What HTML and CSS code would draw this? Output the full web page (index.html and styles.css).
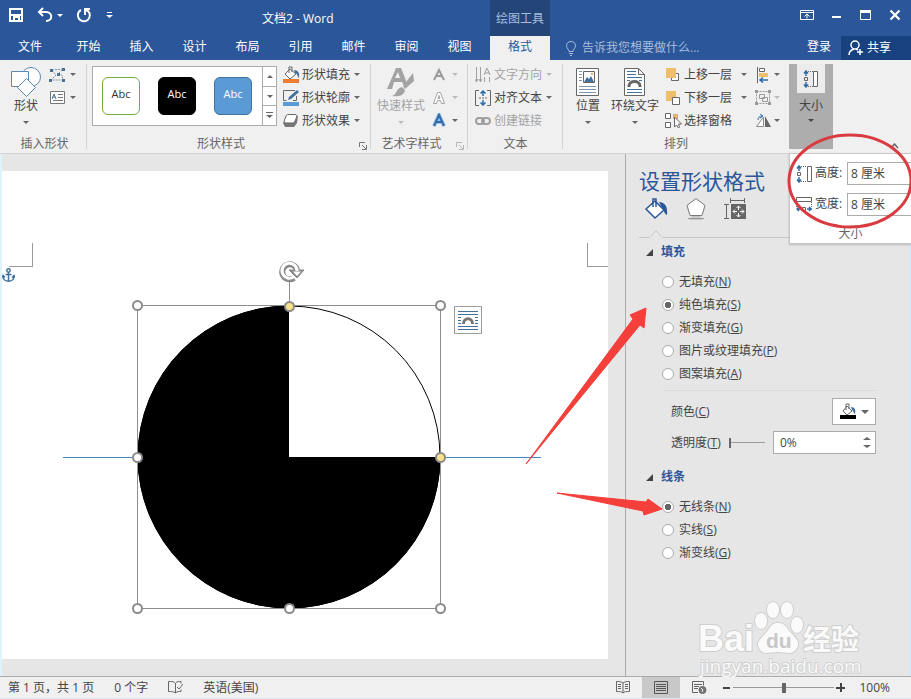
FILE: index.html
```html
<!DOCTYPE html>
<html lang="zh-CN">
<head>
    <meta charset="utf-8">
    <title>文档2 - Word</title>
    <link rel="stylesheet" href="styles.css">
</head>
<body>
<div class="app">
    <header class="titlebar">
        <div class="quick">
            <button class="plain" aria-label="保存"><svg width="16" height="16" viewBox="0 0 16 16" fill="none" stroke="#fff" stroke-width="2"><path d="M2 2h12v12H2z"/><path d="M2 8h12" /><path d="M6 14v-4h5v4"/></svg></button>
            <button class="plain undo" aria-label="撤消"><svg width="16" height="16" viewBox="0 0 16 16" fill="none" stroke="#fff" stroke-width="2"><path d="M6 1L2 5l4 4M2 5h7c7 0 7 9 0 9"/></svg><span class="caret"></span></button>
            <button class="plain redo" aria-label="重复"><svg width="16" height="16" viewBox="0 0 16 16" fill="none" stroke="#fff" stroke-width="2"><path d="M5 3a6 6 0 1 0 7 1L9 3"/><path d="M14 2H9v6"/></svg></button>
            <button class="plain more" aria-label="自定义"><svg width="7" height="7" viewBox="0 0 7 7" fill="#fff"><path d="M1 0h5v1H1zM0 3h7L3.500 6z"/></svg></button>
        </div>
        <div class="doc-title">文档2 - Word</div>
        <div class="context-title">绘图工具</div>
        <div class="window-buttons">
            <button class="plain" aria-label="功能区显示选项"><svg width="14" height="12" viewBox="0 0 14 12" fill="none" stroke="#fff"><path d="M.5 1.500h13v9H.5zM.5 3.500h13M7 9.500v-4M4.500 7.500L7 5l2.500 2.500"/></svg></button>
            <button class="plain" aria-label="最小化"><svg width="10" height="12" viewBox="0 0 10 12"><path d="M0 7h9v2H0z" fill="#fff"/></svg></button>
            <button class="plain" aria-label="最大化"><svg width="11" height="12" viewBox="0 0 11 12"><path d="M.5 1.500h10v9H.5z" fill="none" stroke="#fff"/><path d="M0 1h11v3H0z" fill="#fff"/></svg></button>
            <button class="plain" aria-label="关闭"><svg width="12" height="12" viewBox="0 0 12 12"><path d="M1.500 1.500l9 9M10.500 1.500l-9 9" stroke="#fff" stroke-width="2.200"/></svg></button>
        </div>
    </header>
    <nav class="tabs">
        <button class="tab file">文件</button>
        <button class="tab">开始</button>
        <button class="tab">插入</button>
        <button class="tab">设计</button>
        <button class="tab">布局</button>
        <button class="tab">引用</button>
        <button class="tab">邮件</button>
        <button class="tab">审阅</button>
        <button class="tab">视图</button>
        <button class="tab active">格式</button>
        <button class="tell-me"><svg width="10" height="15" viewBox="0 0 10 15" fill="none" stroke="#a9bddc"><path d="M3 10.500c0-2-2.500-3-2.500-6a4.500 4 0 0 1 9 0c0 3-2.500 4-2.500 6zM3 12.500h4M4 14.500h2"/></svg>告诉我您想要做什么...</button>
        <button class="login">登录</button>
        <button class="share"><svg width="16" height="16" viewBox="0 0 16 16" fill="none" stroke="#fff" stroke-width="1.500"><circle cx="7" cy="5" r="4"/><path d="M1 15c0-3 2-5 5-6M8 9l2 1M12 9v6M9 12h6"/></svg>共享</button>
    </nav>

    <section class="ribbon">
        <div class="group insert">
            <div class="tools">
                <button class="big"><svg width="30" height="30" viewBox="0 0 30 30" fill="#fff" stroke="#5b87b3"><circle cx="20" cy="10" r="9.500"/><path d="M.5 4.500h17v15H.5z"/><path d="M15.500 11.500l9 9-9 9-9-9z"/></svg><span>形状</span><i class="caret"></i></button>
                <div class="rows">
                    <button class="row" aria-label="编辑形状"><svg width="17" height="16" viewBox="0 0 17 16"><path d="M3 3l11-1M3 3l4 5-5 5h12l-1-5-4-1 5-5" fill="none" stroke="#7d95ad" stroke-dasharray="2 1"/><path d="M1 2h3v3H1zM13 1h3v3h-3zM0 12h3v3H0zM13 12h3v3h-3zM8 6h3v3H8z" fill="#4c6f94"/></svg><i class="caret"></i></button>
                    <button class="row" aria-label="文本框"><svg width="17" height="14" viewBox="0 0 17 14" fill="none" stroke="#777"><path d="M1.500.5h14v12h-14z" fill="#fff"/><path d="M9 3.500h5M9 6.500h5M4 9.500h10"/><path d="M3 8l2-5 2 5M4 6h2" stroke="#41719c"/></svg><i class="caret"></i></button>
                </div>
            </div>
            <div class="group-name"><span>插入形状</span></div>
        </div>

        <div class="group styles">
            <div class="tools">
                <div class="gallery">
                    <div class="samples">
                        <button class="sample outline">Abc</button>
                        <button class="sample black">Abc</button>
                        <button class="sample blue">Abc</button>
                    </div>
                    <div class="gallery-scroll">
                        <button aria-label="上一行"><i class="caret up"></i></button>
                        <button aria-label="下一行"><i class="caret"></i></button>
                        <button aria-label="其他"><svg width="7" height="7" viewBox="0 0 7 7" fill="#666"><path d="M0 0h7v1H0zM0 3h7L3.500 6z"/></svg></button>
                    </div>
                </div>
                <div class="rows">
                    <button class="row"><svg width="17" height="17" viewBox="0 0 17 17"><path d="M7 3l6 5-6 5-5-5z" fill="#fff" stroke="#666"/><path d="M6 7V1h3v5" fill="none" stroke="#666"/><path d="M11 4c4 0 6 3 5 8-2-2-1-4-4-5z" fill="#41719c"/><path d="M0 13h16v4H0z" fill="#ed7d31"/></svg>形状填充<i class="caret"></i></button>
                    <button class="row"><svg width="17" height="17" viewBox="0 0 17 17"><path d="M12 1.500H.5v10h3M13.500 7v4.500H10" fill="none" stroke="#666"/><path d="M5 11l1-3 8-7 2 2-8 7z" fill="#41719c"/><path d="M0 13h16v4H0z" fill="#5b9bd5"/></svg>形状轮廓<i class="caret"></i></button>
                    <button class="row"><svg width="17" height="15" viewBox="0 0 17 15"><path d="M4 3h11l-1 7-3 4H2L0 10z" fill="#777"/><path d="M5 1.500h7c2 0 2 1 1.500 3L12 8c-1 2-2 2-3 2H3c-2 0-2-1-1.500-3L3 3c.5-1 1-1.500 2-1.500z" fill="#fff" stroke="#666"/></svg>形状效果<i class="caret"></i></button>
                </div>
            </div>
            <div class="group-name"><span>形状样式</span><button class="launcher" aria-label="设置形状格式"><svg width="8" height="8" viewBox="0 0 8 8" fill="none" stroke="#777"><path d="M.5 5V.5H6M3 3l4 4M7.500 3v4.500H3"/></svg></button></div>
        </div>

        <div class="group wordart">
            <div class="tools">
                <button class="big dim"><svg width="30" height="30" viewBox="0 0 30 30" fill="#a3a3a3"><path d="M1 22L10 1h5l6 15-3 3-2-4H8l-2 7zM9 11h5l-2-6z"/><path d="M27 6l1 8-9 8-2-3z"/><path d="M16 20l3 3c-1 6-7 7-13 6 5-1 4-8 10-9z"/></svg><span>快速样式</span><i class="caret"></i></button>
                <div class="rows">
                    <button class="row dim" aria-label="文本填充"><svg width="14" height="14" viewBox="0 0 14 14"><path d="M2 12L7 2l5 10M4 8h6" fill="none" stroke="#9b9b9b" stroke-width="2"/></svg><i class="caret"></i></button>
                    <button class="row dim" aria-label="文本轮廓"><svg width="14" height="14" viewBox="0 0 14 14"><path d="M1.500 12.500l4-11h3l4 11h-3l-1-3h-3l-1 3zM6 7.500h2l-1-3z" fill="#fff" stroke="#a5a5a5"/></svg><i class="caret"></i></button>
                    <button class="row" aria-label="文本效果"><svg width="14" height="15" viewBox="0 0 14 15"><path d="M2 13L7 2l5 11M4 9h6" fill="none" stroke="#9cc3e6" stroke-width="4"/><path d="M2 13L7 2l5 11M4 9h6" fill="none" stroke="#2f6cab" stroke-width="2"/></svg><i class="caret"></i></button>
                </div>
            </div>
            <div class="group-name"><span>艺术字样式</span><button class="launcher dim" aria-label="设置文本效果"><svg width="8" height="8" viewBox="0 0 8 8" fill="none" stroke="#b5b5b5"><path d="M.5 5V.5H6M3 3l4 4M7.500 3v4.500H3"/></svg></button></div>
        </div>

        <div class="group text">
            <div class="tools">
                <div class="rows">
                    <button class="row dim"><svg width="17" height="16" viewBox="0 0 17 16" fill="none" stroke="#a0a0a0"><path d="M1.500 0v14M5.500 0v14M0 12l1.500 3L3 12M4 12l1.500 3L7 12M9 8l3-7 3 7M10 6h4M9.500 10v5M14.500 10v5"/></svg>文字方向<i class="caret"></i></button>
                    <button class="row"><svg width="17" height="16" viewBox="0 0 17 16" fill="none" stroke="#666"><path d="M4 .5H.5v15H4M12 .5h3.500v15H12"/><path d="M4 8h9" stroke-dasharray="2 1"/><path d="M8 6V1M5.500 3.500L8 1l2.500 2.500M8 10v5M5.500 12.500L8 15l2.500-2.500" stroke="#2b6ca8" stroke-width="1.500"/></svg>对齐文本<i class="caret"></i></button>
                    <button class="row dim"><svg width="17" height="10" viewBox="0 0 17 10" fill="none" stroke="#a0a0a0" stroke-width="2"><rect x="1" y="2" width="8" height="6" rx="3"/><rect x="7" y="2" width="8" height="6" rx="3"/></svg>创建链接</button>
                </div>
            </div>
            <div class="group-name"><span>文本</span></div>
        </div>

        <div class="group arrange">
            <div class="tools">
                <button class="big"><svg width="24" height="30" viewBox="0 0 24 30" fill="none" stroke="#666"><path d="M.5 1.500h22v27H.5z" fill="#fff"/><path d="M3 4.500h3M3 7.500h3M3 10.500h3M3 13.500h3M3 19.500h17M3 22.500h17M3 25.500h17" stroke="#7d95ad"/><path d="M7.500 4.500h11v11h-11z"/><path d="M8 15l3-5 2 2 2-3 3 6z" fill="#41719c" stroke="none"/><circle cx="16" cy="7" r="1" fill="#ed9d31" stroke="none"/></svg><span>位置</span><i class="caret"></i></button>
                <button class="big wrap"><svg width="22" height="30" viewBox="0 0 22 30" fill="none" stroke="#666"><path d="M.5 1.500h14l6 6v21H.5zM14.500 1.500v6h6" fill="#fff"/><path d="M3 4.500h9M3 7.500h9M3 10.500h15M3 13.500h3M15 13.500h3M3 22.500h15M3 25.500h15" stroke="#41719c"/><path d="M5 20v-1c0-6 11-6 11 0v1" stroke-width="3"/></svg><span>环绕文字</span><i class="caret"></i></button>
                <div class="rows order">
                    <button class="row"><svg width="17" height="16" viewBox="0 0 17 16"><path d="M8.500 6.500h5v7h-7v-4" fill="#fff" stroke="#666"/><path d="M1 1h10v10H1z" fill="#f0bd68"/></svg>上移一层<i class="caret"></i></button>
                    <button class="row"><svg width="17" height="16" viewBox="0 0 17 16"><path d="M1 1h10v10H1z" fill="#f0bd68"/><path d="M7.500 7.500h7v7h-7z" fill="#fff" stroke="#666"/></svg>下移一层<i class="caret"></i></button>
                    <button class="row"><svg width="17" height="17" viewBox="0 0 17 17" fill="#fff" stroke="#666"><path d="M8.500 2.500h4v4h-4z" fill="#f0bd68" stroke="#e0a850"/><path d="M.5 1.500h5v5h-5zM.5 10.500h5v5h-5z"/><path d="M9.500 5v10l2-2 2 3 1-1-1-3h3z"/></svg>选择窗格</button>
                </div>
                <div class="rows align">
                    <button class="row" aria-label="对齐"><svg width="17" height="16" viewBox="0 0 17 16"><path d="M2.500 0v16" stroke="#666"/><path d="M4.500 1.500h5v3h-5z" fill="#fff" stroke="#666"/><path d="M4 6h9v4H4z" fill="#f0bd68"/><path d="M13 13H5M8 10.500L5 13l3 2.500" fill="none" stroke="#2b6ca8" stroke-width="1.500"/></svg><i class="caret"></i></button>
                    <button class="row dim" aria-label="组合"><svg width="17" height="16" viewBox="0 0 17 16" fill="none" stroke="#999"><path d="M1.500 1.500h13v12h-13z" stroke-dasharray="2 1"/><path d="M4.500 4.500h5v4h-5zM7.500 7.500h5v4h-5z"/><path d="M0 0h3v3H0zM13 0h3v3h-3zM0 12h3v3H0zM13 12h3v3h-3z" fill="#999" stroke="none"/></svg><i class="caret"></i></button>
                    <button class="row" aria-label="旋转"><svg width="17" height="14" viewBox="0 0 17 14"><path d="M8.500 3v9.500h-7z" fill="#fff" stroke="#888"/><path d="M10 2v11h6z" fill="#666"/><path d="M3 6c0-3 2-4 4-4M5 0l3 2-3 2" fill="none" stroke="#2b6ca8"/></svg><i class="caret"></i></button>
                </div>
            </div>
            <div class="group-name"><span>排列</span></div>
        </div>

        <div class="size-menu">
            <button class="size-button"><span class="size-icon"><svg width="16" height="18" viewBox="0 0 16 18" fill="none" stroke="#666"><path d="M10.500 1.500h4v15h-4z" fill="#fff"/><path d="M1.500 7.500h3v3h-3z"/><path d="M5 1.500h5M5 16.500h5" stroke-dasharray="1 1"/><path d="M3 1v5M1 3.500L3 1l2 2.500M3 12v5M1 14.500L3 17l2-2.500" stroke="#2b6ca8" stroke-width="1.500"/></svg></span><span>大小</span><i class="caret"></i></button>
            <div class="size-popup">
                <div class="size-row"><svg width="17" height="18" viewBox="0 0 17 18" fill="none" stroke="#666"><path d="M11.500 1.500h4v15h-4z" fill="#fff"/><path d="M1.500 7.500h3v3h-3z"/><path d="M5 1.500h6M5 16.500h6" stroke-dasharray="1 1"/><path d="M3 1v5M1 3.500L3 1l2 2.500M3 12v5M1 14.500L3 17l2-2.500" stroke="#2b6ca8" stroke-width="1.500"/></svg><label for="height">高度:</label><input id="height" type="text" value="8 厘米"></div>
                <div class="size-row"><svg width="17" height="18" viewBox="0 0 17 18" fill="none" stroke="#666"><path d="M.5 1.500h15v4H.5z" fill="#fff"/><path d="M6.500 11.500h3v3h-3z"/><path d="M.5 6v6M15.500 6v6" stroke-dasharray="1 1"/><path d="M5 13H1M3 11l-2 2 2 2M11 13h5M13 11l2 2-2 2" stroke="#2b6ca8" stroke-width="1.500"/></svg><label for="width">宽度:</label><input id="width" type="text" value="8 厘米"></div>
                <div class="size-name">大小</div>
            </div>
            <svg class="ring" width="128" height="100" viewBox="0 0 128 100"><ellipse cx="65" cy="50" rx="61" ry="46" fill="none" stroke="#d93b40" stroke-width="3"/></svg>
        </div>
        <button class="plain collapse" aria-label="折叠功能区"><svg width="9" height="6" viewBox="0 0 9 6"><path d="M1 5l3.500-4L8 5" fill="none" stroke="#666" stroke-width="1.500"/></svg></button>
    </section>

    <main class="workspace">
        <div class="document">
            <div class="page">
                <i class="corner left"></i>
                <i class="corner right"></i>
                <svg class="anchor" width="13" height="15" viewBox="0 0 13 15" fill="none" stroke="#41719c" stroke-width="1.500"><circle cx="6.500" cy="2.500" r="1.700"/><path d="M6.500 4v10M3.500 6.500h6M1 8c0 7 11 7 11 0M0 9.500l1-2 2 2M10 9.500l2-2 1 2"/></svg>
                <svg class="drawing" width="484" height="356" viewBox="61 259 484 356">
                    <path d="M63 457.500h478" stroke="#4a86bd"/>
                    <circle cx="289" cy="457" r="151" fill="#fff" stroke="#000"/>
                    <path d="M289 457h151.500A151.500 151.500 0 1 1 289 305.500z"/>
                    <path d="M137.500 305.500h303v303h-303zM289.500 281v25" fill="none" stroke="#8e8e8e"/>
                    <g fill="#fff" stroke="#8b8b8b" stroke-width="2">
                        <circle cx="137.500" cy="305.500" r="4.500"/>
                        <circle cx="440.500" cy="305.500" r="4.500"/>
                        <circle cx="137.500" cy="457.500" r="4.500"/>
                        <circle cx="137.500" cy="608.500" r="4.500"/>
                        <circle cx="289.500" cy="608.500" r="4.500"/>
                        <circle cx="440.500" cy="608.500" r="4.500"/>
                        <g fill="#fbe38b"><circle cx="289.500" cy="306.500" r="4.500"/><circle cx="440.500" cy="457.500" r="4.500"/></g>
                    </g>
                    <path d="M294 278a7.500 7.500 0 1 1 3-8" fill="none" stroke="#8b8b8b" stroke-width="6"/>
                    <path d="M289 270h15l-7 8z" fill="#8b8b8b" stroke="#8b8b8b"/>
                    <path d="M293.500 277a7.500 7.500 0 1 1 3.500-6" fill="none" stroke="#fff" stroke-width="3"/>
                    <path d="M293 271.500h8l-4 4.500z" fill="#fff"/>
                    <path d="M454.500 306.500h27v27h-27z" fill="#fff" stroke="#9a9a9a"/>
                    <path d="M458 311.500h20M458 314.500h20M458 326.500h20M458 329.500h20M458 317.500h3M475 317.500h3M458 320.500h3M475 320.500h3M458 323.500h3M475 323.500h3" stroke="#41719c"/>
                    <path d="M463.500 324c0-7 9-7 9 0" fill="none" stroke="#777" stroke-width="3"/>
                </svg>
            </div>
        </div>

        <aside class="pane">
            <h2>设置形状格式</h2>
            <div class="pane-tabs">
                <button class="plain" aria-label="填充与线条"><svg width="24" height="24" viewBox="0 0 24 24"><path d="M11 4l9 9-9 8-9-9z" fill="#fff" stroke="#2b579a" stroke-width="1.500"/><path d="M9 10V2h3v8" fill="none" stroke="#2b579a" stroke-width="1.500"/><path d="M15 5c6 0 9 5 8 13-4-2-2-5-5-7z" fill="#2b579a"/></svg></button>
                <button class="plain" aria-label="效果"><svg width="22" height="24" viewBox="0 0 22 24"><path d="M4 23l3-4h8l3 4z" fill="#c7c7c7"/><path d="M11 1.500l9 7-3 10H5l-3-10z" fill="#fff" stroke="#777"/><path d="M3 21.500h16" stroke="#999"/></svg></button>
                <button class="plain" aria-label="布局属性"><svg width="22" height="24" viewBox="0 0 22 24"><path d="M6 3.500h15M6.500 1v5M20.500 1v5M2.500 7v15M0 7.500h5M0 21.500h5" stroke="#666"/><path d="M7 7h15v15H7z" fill="#666"/><path d="M14.500 9v4M14.500 16v4M9 14.500h4M16 14.500h4M12.500 11l2-2 2 2M12.500 18l2 2 2-2M11 12.500l-2 2 2 2M18 12.500l2 2-2 2" fill="none" stroke="#fff"/></svg></button>
            </div>
            <div class="pane-rule"><svg width="35" height="9" viewBox="0 0 35 9"><path d="M0 8.500h11l6-7 6 7h12" fill="none" stroke="#c8c8c8"/></svg></div>
            <h3>填充</h3>
            <div class="options">
                <label><input type="radio" name="fill">无填充(<u>N</u>)</label>
                <label><input type="radio" name="fill" checked>纯色填充(<u>S</u>)</label>
                <label><input type="radio" name="fill">渐变填充(<u>G</u>)</label>
                <label><input type="radio" name="fill">图片或纹理填充(<u>P</u>)</label>
                <label><input type="radio" name="fill">图案填充(<u>A</u>)</label>
            </div>
            <div class="settings">
                <div class="setting">
                    <label for="color">颜色(<u>C</u>)</label>
                    <button id="color" class="color-button"><svg width="17" height="17" viewBox="0 0 17 17"><path d="M7 3l5 5-5 4-4-4z" fill="#fff" stroke="#666"/><path d="M6 7V1h3v5" fill="none" stroke="#666"/><path d="M11 4c4 0 5 3 4 7-2-1-1-3-3-4z" fill="#41719c"/><path d="M0 12h16v4H0z"/></svg><i class="caret"></i></button>
                </div>
                <div class="setting">
                    <label for="opacity">透明度(<u>T</u>)</label>
                    <input class="slider" type="range" min="0" max="100" value="0" aria-label="透明度">
                    <span class="spinner"><input id="opacity" type="text" value="0%"><span class="spin"><button aria-label="增加"><i class="caret up"></i></button><button aria-label="减少"><i class="caret"></i></button></span></span>
                </div>
            </div>
            <h3>线条</h3>
            <div class="options">
                <label><input type="radio" name="line" checked>无线条(<u>N</u>)</label>
                <label><input type="radio" name="line">实线(<u>S</u>)</label>
                <label><input type="radio" name="line">渐变线(<u>G</u>)</label>
            </div>
            <svg class="watermark" width="170" height="80" viewBox="0 0 170 80">
                <g fill="#fafafa" stroke="#cfcfcf" stroke-width="2" paint-order="stroke">
                    <text class="logo" x="2" y="54">Bai</text>
                    <ellipse cx="65" cy="24" rx="6" ry="8"/>
                    <ellipse cx="77" cy="13" rx="6" ry="8"/>
                    <ellipse cx="91" cy="13" rx="6" ry="8"/>
                    <ellipse cx="101" cy="28" rx="6" ry="8"/>
                    <path d="M82 26c8 0 9 6 14 11s8 9 5 14c-4 8-11 4-19 4s-15 4-19-4c-3-5 1-9 6-14s5-11 13-11z"/>
                    <text class="jingyan" x="107" y="53">经验</text>
                    <text class="site" x="4" y="76">jingyan.baidu.com</text>
                </g>
                <text class="du" x="70" y="51">du</text>
            </svg>
        </aside>
        <svg class="arrow fill-arrow" width="124" height="160" viewBox="0 0 124 160"><path d="M2 158L109 13l-3-4 16-7-2 20-4-3z" fill="#f43f3a" stroke="#f43f3a"/></svg>
        <svg class="arrow line-arrow" width="108" height="28" viewBox="0 0 108 28"><path d="M1 3l89 9 2-3 14 10-18 6-1-4z" fill="#f43f3a" stroke="#f43f3a"/></svg>
    </main>

    <footer class="status">
        <span>第 1 页，共 1 页</span>
        <span>0 个字</span>
        <svg width="15" height="13" viewBox="0 0 15 13" fill="none" stroke="#666"><path d="M7.500 2v10M7 1.500C5 .5 3 .5.5.5v10c3 0 5 0 7 1.500M8 1.500c1-1 3-1 5-1v2M8 11.500c1-1 3-1 5-1v-2M9 6l2 2 4-5"/></svg>
        <span>英语(美国)</span>
        <div class="views">
            <button aria-label="阅读视图"><svg width="14" height="13" viewBox="0 0 14 13" fill="none" stroke="#666"><path d="M7 2v10M7 2C5 .5 3 .5.5.5v10c3 0 5 0 6.500 1.500 1.500-1.500 3.500-1.500 6.500-1.500V.5C11 .5 9 .5 7 2M2 3.500h3M2 5.500h3M2 7.500h3M9 3.500h3M9 5.500h3M9 7.500h3"/></svg></button>
            <button class="current" aria-label="页面视图"><svg width="14" height="13" viewBox="0 0 14 13" fill="none" stroke="#555"><path d="M.5.5h13v12H.5zM2 3.500h10M2 5.500h10M2 7.500h10M2 9.500h10"/></svg></button>
            <button aria-label="Web 版式视图"><svg width="15" height="13" viewBox="0 0 15 13" fill="none" stroke="#666"><path d="M6 11.500H.5V.5h11v4M2 3.500h8M2 5.500h5M2 7.500h4"/><circle cx="10.500" cy="9" r="3.500" fill="#777"/><path d="M9 7l2 2-1 2" stroke="#eee"/></svg></button>
        </div>
        <div class="zoom-bar">
            <button aria-label="缩小"><svg width="9" height="9" viewBox="0 0 9 9"><path d="M1 4h7v2H1z" fill="#444"/></svg></button>
            <input class="slider zoom" type="range" min="0" max="100" value="50" aria-label="缩放">
            <button aria-label="放大"><svg width="9" height="9" viewBox="0 0 9 9"><path d="M0 4h9v2H0zM4 0h2v9H4z" fill="#444"/></svg></button>
        </div>
        <span class="percent">100%</span>
    </footer>
</div>
</body>
</html>
```

FILE: styles.css
```css
* {
    box-sizing: border-box;
}

body {
    margin: 0;
    font-family: "Open Sans", "Noto Sans CJK SC", sans-serif;
    font-size: 12px;
    line-height: 18px;
    color: #444;
}

button,
input {
    margin: 0;
    padding: 0;
    border: none;
    background: none;
    font: inherit;
    color: inherit;
}

button {
    display: flex;
    align-items: center;
    justify-content: center;
    white-space: nowrap;
}

svg {
    display: block;
    flex: none;
}

.app {
    display: flex;
    flex-direction: column;
    min-height: 100vh;
}

/* 小三角 */
.caret {
    flex: none;
    width: 0;
    height: 0;
    border: 3px solid transparent;
    border-top-color: #666;
    border-bottom: none;
}

.caret.up {
    border-top: none;
    border-bottom: 3px solid #666;
}

.dim {
    color: #a3a3a3;
}

.dim .caret {
    border-top-color: #bbb;
}

/* 标题栏 */
.titlebar {
    display: flex;
    height: 36px;
    background-color: #2b579a;
    color: #fff;
}

.quick {
    display: flex;
    align-items: center;
    width: 262px;
    padding: 0 0 6px 8px;
}

.quick .caret {
    border-top-color: #fff;
    margin-left: 4px;
}

.undo {
    margin-left: 13px;
}

.redo {
    margin-left: 13px;
}

.more {
    margin-left: 14px;
}

.doc-title {
    width: 228px;
    line-height: 37px;
}

.context-title {
    width: 60px;
    background-color: #234578;
    color: #a9bddc;
    line-height: 37px;
    text-align: center;
}

.window-buttons {
    display: flex;
    gap: 18px;
    margin-left: auto;
    padding: 0 10px 6px 0;
}

/* 选项卡 */
.tabs {
    display: flex;
    height: 24px;
    background-color: #2b579a;
    color: #fff;
}

.tab {
    width: 53px;
    padding-bottom: 2px;
}

.tab.file {
    width: 60px;
    margin-right: 2px;
}

.tab.active {
    width: 60px;
    margin-left: 4px;
    background-color: #f0f0f0;
    color: #2b579a;
}

.tell-me {
    gap: 6px;
    margin-left: 16px;
    color: #a9bddc;
}

.login {
    margin-left: auto;
    margin-right: 10px;
    padding-bottom: 2px;
}

.share {
    justify-content: flex-start;
    gap: 3px;
    width: 70px;
    padding-left: 7px;
    background-color: #17427f;
}

/* 功能区 */
.ribbon {
    position: relative;
    display: flex;
    height: 94px;
    padding-left: 2px;
    background-color: #f0f0f0;
    border-bottom: 1px solid #d2d2d2;
}

.group {
    position: relative;
    display: flex;
    flex-direction: column;
    flex: none;
}

.group::after {
    content: "";
    position: absolute;
    right: 0;
    top: 4px;
    bottom: 4px;
    width: 1px;
    background-color: #d2d2d2;
}

.tools {
    display: flex;
    flex: 1;
    padding-top: 3px;
}

.group-name {
    display: flex;
    align-items: center;
    height: 19px;
    color: #666;
}

.group-name span {
    flex: 1;
    text-align: center;
}

.launcher {
    width: 16px;
    height: 16px;
    padding-top: 4px;
}

.big {
    flex-direction: column;
    justify-content: flex-start;
    padding-top: 4px;
}

.big .caret {
    margin-top: 6px;
}

.row {
    justify-content: flex-start;
    gap: 2px;
    height: 23px;
}

.row .caret {
    margin-left: 2px;
}

.insert {
    width: 85px;
}

.insert .big {
    margin-left: 9px;
}

.insert .rows {
    margin-left: 8px;
}

.styles {
    width: 284px;
}

.gallery {
    display: flex;
    width: 185px;
    height: 60px;
    margin: 3px 6px 0 5px;
    background-color: #fff;
    border: 1px solid #ababab;
}

.samples {
    display: flex;
    flex: 1;
    align-items: center;
    gap: 18px;
    padding-left: 9px;
}

.sample {
    width: 38px;
    height: 38px;
    border: 1px solid #000;
    border-radius: 6px;
    color: #fff;
    font-size: 11px;
    padding-bottom: 4px;
}

.sample.outline {
    border-color: #70ad47;
    color: #333;
}

.sample.black {
    background-color: #000;
}

.sample.blue {
    background-color: #5b9bd5;
    border-color: #41719c;
}

.gallery-scroll {
    display: flex;
    flex-direction: column;
    width: 14px;
    border-left: 1px solid #ababab;
}

.gallery-scroll button {
    flex: 1;
}

.gallery-scroll button + button {
    border-top: 1px solid #ababab;
}

.wordart {
    width: 97px;
}

.wordart .big {
    width: 48px;
    margin-left: 6px;
}

.wordart .rows {
    margin-left: 7px;
}

.wordart .row .caret {
    margin-left: 4px;
}

.text {
    width: 95px;
}

.text .rows {
    margin-left: 7px;
}

.arrange {
    width: 226px;
}

.arrange::after {
    display: none;
}

.arrange .big {
    margin-left: 13px;
}

.arrange .big.wrap {
    margin-left: 11px;
}

.order {
    margin-left: 6px;
}

.order .row .caret {
    margin-left: 7px;
}

.align {
    margin-left: 8px;
}

.align .row .caret {
    margin-left: 0;
}

.size-menu {
    position: relative;
    padding-top: 4px;
}

.size-button {
    flex-direction: column;
    justify-content: flex-start;
    width: 44px;
    height: 85px;
    background-color: #adadad;
}

.size-icon {
    display: flex;
    align-items: center;
    justify-content: center;
    width: 28px;
    height: 29px;
    margin-bottom: 4px;
    background-color: #ececec;
}

.size-button .caret {
    margin-top: 4px;
    border-top-color: #444;
}

.size-popup {
    position: absolute;
    z-index: 2;
    left: 0;
    top: 93px;
    width: 122px;
    padding: 8px 0 0 6px;
    overflow: hidden;
    background-color: #fff;
    border: 1px solid #c6c6c6;
    border-right: none;
    box-shadow: 0 1px 2px rgba(0, 0, 0, 0.2);
}

.size-row {
    display: flex;
    align-items: center;
    height: 23px;
    margin-bottom: 8px;
}

.size-row label {
    width: 34px;
    padding: 0 0 2px 2px;
    white-space: nowrap;
}

.size-row input {
    flex: 1;
    min-width: 0;
    height: 23px;
    padding: 0 0 2px 3px;
    border: 1px solid #ababab;
    border-right: none;
}

.size-name {
    height: 19px;
    padding-right: 6px;
    line-height: 20px;
    text-align: center;
    color: #666;
}

.ring {
    position: absolute;
    z-index: 3;
    left: -4px;
    top: 71px;
}

.collapse {
    position: absolute;
    right: 12px;
    bottom: 4px;
}

/* 工作区 */
.workspace {
    position: relative;
    display: flex;
    flex: 1;
    background-color: #e6e6e6;
    border-left: 2px solid #dff3fb;
    border-right: 2px solid #d5e8f8;
}

.document {
    display: flex;
    flex: 1;
    padding: 17px 17px 17px 0;
}

.page {
    position: relative;
    flex: 1;
    background-color: #fff;
}

.corner {
    position: absolute;
    top: 72px;
    height: 24px;
    border-bottom: 1px solid #9a9a9a;
}

.corner.left {
    left: 7px;
    width: 24px;
    border-right: 1px solid #9a9a9a;
}

.corner.right {
    right: 0;
    width: 21px;
    border-left: 1px solid #9a9a9a;
}

.anchor {
    position: absolute;
    left: 0;
    top: 97px;
}

.drawing {
    position: absolute;
    left: 59px;
    top: 88px;
}

.pane {
    position: relative;
    width: 284px;
    padding: 12px 0 0 13px;
    border-left: 1px solid #ababab;
}

.pane h2 {
    margin: 0;
    font-size: 21px;
    font-weight: normal;
    line-height: 30px;
    color: #2b579a;
}

.pane-tabs {
    display: flex;
    gap: 17px;
    padding: 1px 0 0 5px;
}

.pane-rule {
    display: flex;
    align-items: flex-end;
    width: 233px;
    margin: 8px 0 4px;
}

.pane-rule::after {
    content: "";
    flex: 1;
    border-bottom: 1px solid #c8c8c8;
}

.pane h3 {
    display: flex;
    align-items: center;
    gap: 8px;
    margin: 0 0 8px 7px;
    font-size: 12px;
    line-height: 20px;
    color: #2b579a;
}

.pane h3::before {
    content: "";
    border-left: 7px solid transparent;
    border-bottom: 7px solid #444;
}

.options label {
    display: flex;
    align-items: center;
    height: 23px;
    padding-left: 23px;
}

.options input {
    appearance: none;
    width: 12px;
    height: 12px;
    margin-right: 5px;
    border: 1px solid #ababab;
    border-radius: 50%;
    background-color: #fff;
}

.options input:checked {
    background-image: radial-gradient(circle, #666 3px, transparent 3px);
}

.settings {
    display: flex;
    flex-direction: column;
    gap: 6px;
    width: 212px;
    margin: 5px 0 13px 25px;
    padding-top: 7px;
    border-top: 1px solid #dadada;
}

.setting {
    display: flex;
    align-items: center;
    justify-content: space-between;
    padding-left: 7px;
}

.color-button {
    gap: 4px;
    width: 44px;
    height: 27px;
    background-color: #fff;
    border: 1px solid #ababab;
}

.color-button .caret {
    border-width: 4px 4px 0;
}

.slider {
    appearance: none;
    width: 36px;
    height: 12px;
    background: linear-gradient(#999, #999) center / 100% 1px no-repeat;
}

.slider::-webkit-slider-thumb {
    appearance: none;
    width: 2px;
    height: 10px;
    background-color: #666;
}

.spinner {
    display: flex;
    width: 103px;
    height: 23px;
    background-color: #fff;
    border: 1px solid #ababab;
}

.spinner input {
    flex: 1;
    min-width: 0;
    padding-left: 6px;
}

.spin {
    display: flex;
    flex-direction: column;
    justify-content: center;
    gap: 5px;
    width: 16px;
}

.spin .caret {
    border-left-width: 4px;
    border-right-width: 4px;
}

.watermark {
    position: absolute;
    right: 43px;
    bottom: -1px;
}

.logo {
    font: bold 36px "Liberation Sans", sans-serif;
}

.jingyan {
    font: bold 28px "Noto Sans CJK SC", sans-serif;
}

.site {
    font: 19px "Open Sans", sans-serif;
}

.du {
    font: bold 21px "Liberation Sans", sans-serif;
    fill: #c8c8c8;
}

.arrow {
    position: absolute;
}

.fill-arrow {
    left: 522px;
    top: 152px;
}

.line-arrow {
    left: 554px;
    top: 336px;
}

/* 状态栏 */
.status {
    display: flex;
    align-items: center;
    gap: 20px;
    height: 23px;
    padding: 0 21px 0 8px;
    background-color: #f0f0f0;
    border-top: 1px solid #ababab;
    border-bottom: 1px solid #d5e8f8;
    white-space: nowrap;
}

.views {
    display: flex;
    align-self: stretch;
    margin-left: auto;
    margin-right: -16px;
}

.views button {
    width: 38px;
}

.views .current {
    background-color: #c8c8c8;
}

.zoom-bar {
    display: flex;
    align-items: center;
    gap: 2px;
}

.zoom {
    width: 101px;
}

.zoom::-webkit-slider-thumb {
    width: 4px;
}

.percent {
    margin-left: -6px;
}
```
